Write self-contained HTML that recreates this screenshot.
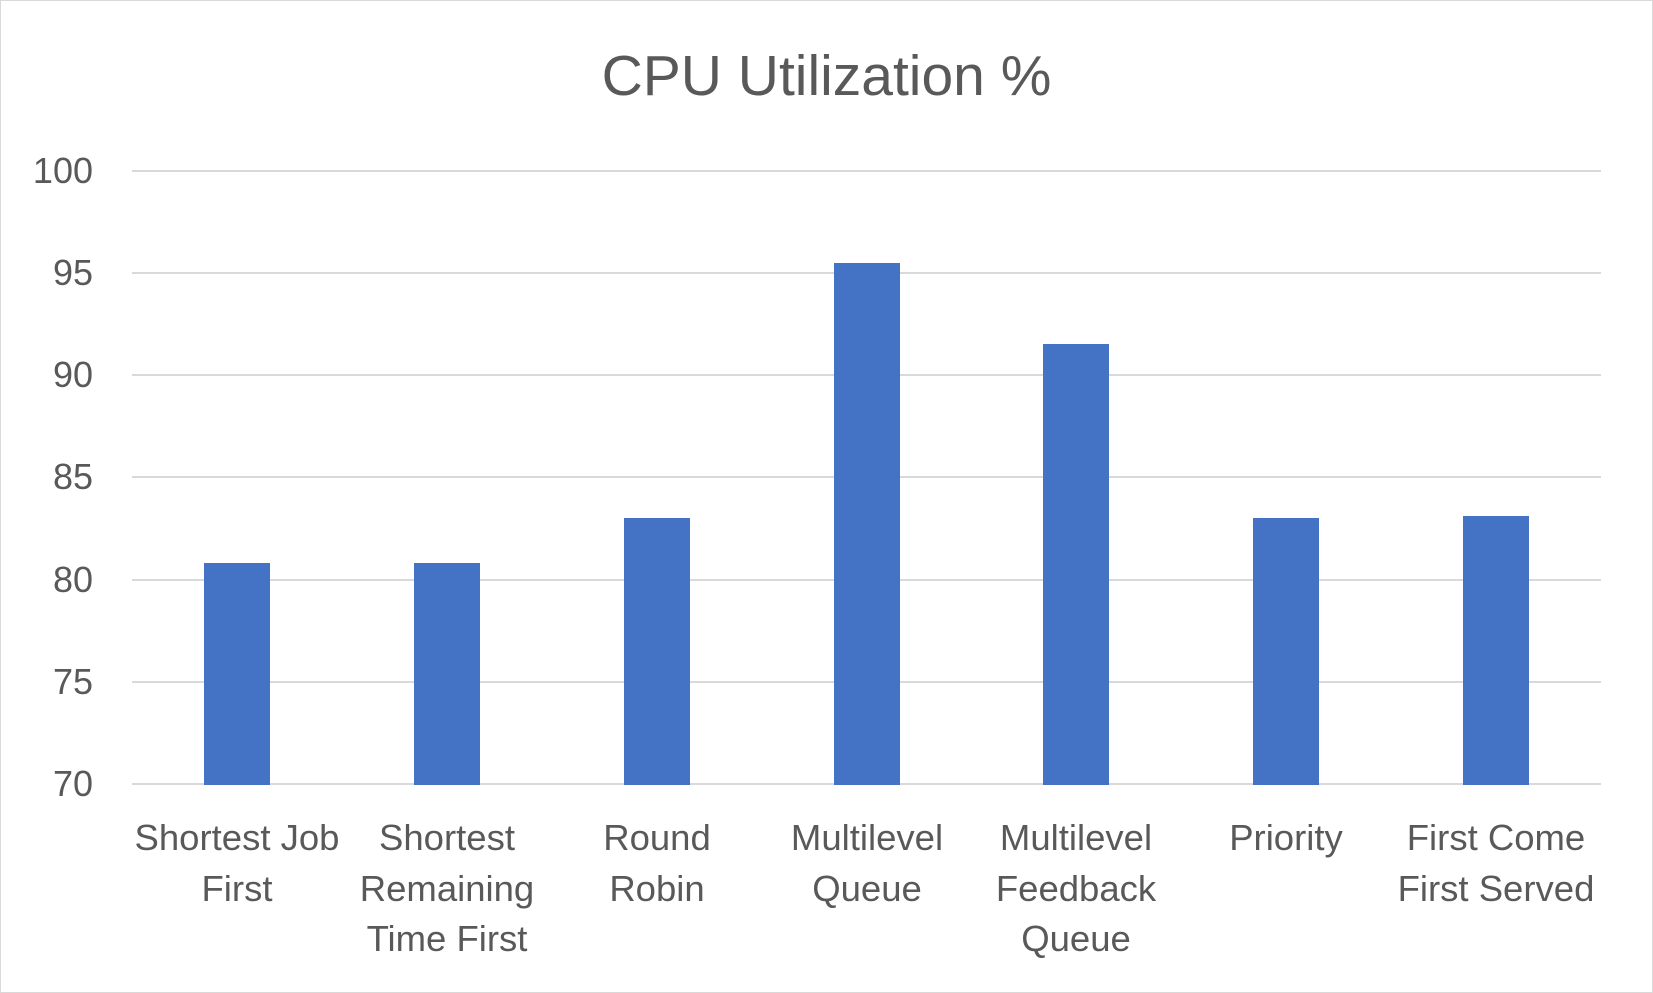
<!DOCTYPE html>
<html><head><meta charset="utf-8"><style>
body{margin:0;width:1653px;height:993px;background:#fff;overflow:hidden;font-family:"Liberation Sans",sans-serif;color:#595959;}
.frame{position:absolute;left:0;top:0;width:1651px;height:991px;border:1px solid #d9d9d9;}
.t{position:absolute;white-space:nowrap;}
.g{position:absolute;left:132px;width:1469px;height:2px;background:#d9d9d9;}
.y{position:absolute;right:1560px;font-size:36px;transform:translateY(-50%);}
.b{position:absolute;width:66px;background:#4472c4;bottom:208px;}
.c{position:absolute;top:813px;width:240px;margin-left:-120px;text-align:center;font-size:36.5px;line-height:50.6px;}
</style></head><body>
<div class="frame"></div>
<div class="t" style="left:0;width:1653px;text-align:center;top:43px;font-size:57px;">CPU Utilization %</div>
<div class="g" style="top:170px"></div>
<div class="g" style="top:272px"></div>
<div class="g" style="top:374px"></div>
<div class="g" style="top:476px"></div>
<div class="g" style="top:579px"></div>
<div class="g" style="top:681px"></div>
<div class="g" style="top:783px"></div>
<div class="t y" style="top:171px">100</div>
<div class="t y" style="top:273px">95</div>
<div class="t y" style="top:375px">90</div>
<div class="t y" style="top:477px">85</div>
<div class="t y" style="top:580px">80</div>
<div class="t y" style="top:682px">75</div>
<div class="t y" style="top:784px">70</div>
<div class="b" style="left:204px;top:563px"></div>
<div class="b" style="left:414px;top:563px"></div>
<div class="b" style="left:624px;top:518px"></div>
<div class="b" style="left:834px;top:263px"></div>
<div class="b" style="left:1043px;top:344px"></div>
<div class="b" style="left:1253px;top:518px"></div>
<div class="b" style="left:1463px;top:516px"></div>
<div class="c" style="left:237px">Shortest Job<br>First</div>
<div class="c" style="left:447px">Shortest<br>Remaining<br>Time First</div>
<div class="c" style="left:657px">Round<br>Robin</div>
<div class="c" style="left:867px">Multilevel<br>Queue</div>
<div class="c" style="left:1076px">Multilevel<br>Feedback<br>Queue</div>
<div class="c" style="left:1286px">Priority</div>
<div class="c" style="left:1496px">First Come<br>First Served</div>
</body></html>
